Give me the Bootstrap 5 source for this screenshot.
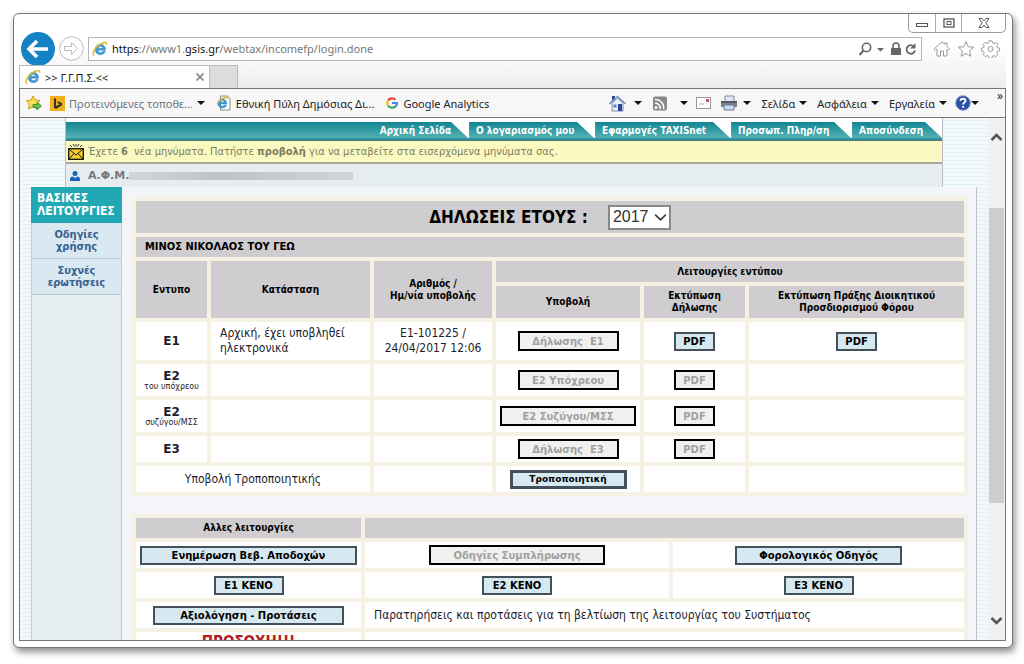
<!DOCTYPE html>
<html lang="el">
<head>
<meta charset="utf-8">
<meta name="viewport" content="width=device-width, initial-scale=1">
<title>&gt;&gt; Γ.Γ.Π.Σ.&lt;&lt;</title>
<link href="https://cdn.jsdelivr.net/npm/bootstrap@5.3.0/dist/css/bootstrap.min.css" rel="stylesheet">
<style>
:root{--page:"DejaVu Sans Condensed","DejaVu Sans",sans-serif;--wide:"DejaVu Sans",sans-serif;--chrome:"Noto Sans","Open Sans",sans-serif}
body{font-family:var(--page);font-size:12px;line-height:15px;color:#1c1c2c;background:#fff;padding:13px 11px 16px 13px;height:100vh}
button{font:inherit;color:inherit}
svg{display:block;flex:none}
a{text-decoration:none;color:inherit}
.plain{border:0;background:none;padding:0}
.win{border:1px solid #777;border-radius:6px;box-shadow:2px 4px 7px rgba(0,0,0,.45);padding:0 6px 6px 5px;position:relative;background:#fff}
.frame-top{background:linear-gradient(#fff 45%,#ececee);padding-top:18px}
.chrome{font-family:var(--chrome);font-size:11px;color:#222}
.controls{top:0;right:6px;height:19px;border:1px solid #999;border-top:0;border-radius:0 0 5px 5px;background:#fff;overflow:hidden}
.controls button{width:26px}
.controls button+button{border-left:1px solid #aaa}
.controls button:last-child{width:44px}
.navrow{height:33px;padding-left:2px}
.address{height:24px;border:1px solid #b5b5b5;background:#fff;padding:0 3px;gap:4px;color:#777}
.address b{font-weight:400;color:#111}
.tools{margin:0 6px 0 10px}
.tabrow{height:23px}
.doc-tab{width:191px;background:#fff;border:1px solid #bbb;border-bottom:0;padding:0 5px;gap:4px}
.new-tab{width:28px;background:#dcdcde;border:1px solid #bbb;border-left:0;border-bottom:0}
.favbar{height:30px;border:1px solid #777;background:#f7f7f8;padding:0 26px 0 6px;white-space:nowrap;position:relative}
.fav-icon{margin:0 5px 0 12px}
.menu-btn{margin-left:10px}
.caret{width:0;height:0;border:4px solid transparent;border-top-color:#111;border-bottom:0;flex:none}
.overflow-mark{top:-1px;right:2px;font-size:12px}
.view{border:1px solid #777;border-top:0;overflow:hidden;background:repeating-linear-gradient(#f3f8fc 0 2px,#e2f0f6 2px 3px,#f3f8fc 3px 4px)}
.site-head{margin:0 45px;border:1px solid #bcbcc4;border-width:0 1px;padding-top:4px;background:#fff}
.site-nav{height:18px;border-bottom:2px solid #2b9397;gap:1px}
.site-nav a{background:linear-gradient(#128592,#55b2b4);color:#fff;font-weight:700;font-size:10px;line-height:17px;padding-left:7px;clip-path:polygon(0 0,calc(100% - 17px) 0,100% 100%,0 100%);flex:none}
.site-nav a:first-child{flex:1;text-align:right;padding-right:17px}
.n1{width:125px}.n2{width:135px}.n3{width:120px}.n4{width:90px}
.notice{height:24px;background:#fafac0;border-bottom:2px solid #a9a9a0;border-top:1px solid #50757c;color:#7c7c66;padding-left:2px;gap:4px;font-size:11px}
.afm{height:23px;background:#e6edf0;color:#777;font-weight:700;padding-left:4px;gap:8px;font-size:11px;font-family:var(--wide)}
.redact{width:224px;height:8px;background:linear-gradient(90deg,#d3d5d8,#bfc2c7 40%,#d0d3d7);margin-left:-8px}
.body-row{margin:0 11px;border-right:1px solid #bfc3cb;background:#f4f5f8}
.side{width:91px;background:#e6edef;border:1px solid #c4cdd4;border-width:0 1px;font-weight:700;color:#36618f;font-size:11px;line-height:12px;text-align:center}
.side h2{font-size:12px;line-height:13px;font-weight:700;text-align:left;color:#fff;background:#22a8b4;margin:0 -1px;padding:5px 0 5px 6px;height:36px}
.side a{display:block;height:36px;padding-top:6px;background:#d9e8f1;border-bottom:1px solid #bccbd6}
.main{padding:10px 8px 0 10px}
.forms{width:100%;table-layout:fixed;border-collapse:separate;border-spacing:4px;background:#f5f2e3;margin-bottom:18px;color:#1c1c2c}
.forms td,.forms th{padding:0;text-align:center;vertical-align:middle;line-height:12px}
.forms td{background:#fff}
.forms th,.forms .grey{background:#cfcdcf;font-size:10px;font-weight:700;color:#000}
.forms .owner{font-size:11px}
.forms tbody th{background:#fff;font-size:12px;color:#1c1c2c;font-family:var(--wide)}
.forms small{display:block;font-size:8px;line-height:9px;font-weight:400;font-family:var(--wide)}
.forms .lines{line-height:15px}
.forms .txt{text-align:left;padding-left:9px}
.c1{width:71px}.c2{width:159px}.c3{width:118px}.c4{width:144px}.c5{width:101px}.c6{width:215px}
.d1{width:225px}.d2{width:304px}.d3{width:291px}
.h20{height:20px}.h21{height:21px}.h24{height:24px}.h26{height:26px}.h32{height:32px}.h38{height:38px}
.year-row{gap:20px}
.year-label{font-size:17px;line-height:20px}
.year{width:63px;height:25px;border:2px solid #888;border-radius:0;padding:0 3px;font-family:"Liberation Sans",sans-serif;font-size:16px;line-height:20px;color:#333;background-position:right 2px center;background-size:13px 13px}
.act{height:19px;border:2px solid #44505a;background:#d6e8f0;color:#000;font:700 10px/13px var(--wide);padding:0;border-radius:0;vertical-align:middle;white-space:nowrap}
.act:disabled{height:20px;border-color:#000;background:#f0f0f0;color:#a0a0a0}
.act.main-act{font-size:9px;border-width:3px}
.w41{width:41px}.w70{width:70px}.w100{width:101px}.w117{width:117px}.w136{width:136px}.w167{width:167px}.w176{width:176px}.w191{width:191px}.w217{width:217px}
.alert-line{color:#b02020;font-size:15px;font-weight:700;line-height:20px}
.sbar{width:17px;background:#f0f0f0;padding:12px 1px}
.thumb{background:#cdcdcd;height:295px;margin-top:65px}
</style>
</head>
<body>
<svg width="0" height="0" class="position-absolute" aria-hidden="true">
<symbol id="ie" viewBox="0 0 16 16"><path d="M13.6 9.2H6.1c.2 1.500 1.100 2.300 2.400 2.300 1 0 1.700-.4 2.200-1.200h2.600c-.8 2.300-2.500 3.500-4.900 3.500C5.200 13.800 3.200 11.700 3.200 8.600s2.200-5.300 5.200-5.300c3.200 0 5.200 2.300 5.200 5.300zM6.200 7.200h4.500C10.500 6 9.700 5.300 8.500 5.300S6.500 6 6.200 7.200z" fill="#3f9bd8" stroke="#2277b5" stroke-width=".4"/><path d="M2 14.600C-.4 12.600 2.800 6.600 8 3.300c4-2.500 7.300-2.600 6.500.6" fill="none" stroke="#d9b92c" stroke-width="1.500"/></symbol>
</svg>
<div class="win d-flex flex-column h-100">
  <div class="controls position-absolute d-flex">
    <button class="plain d-flex align-items-center justify-content-center" aria-label="Ελαχιστοποίηση"><svg width="12" height="10" viewBox="0 0 12 10"><rect x=".5" y="5.500" width="11" height="3" fill="#fff" stroke="#555"/></svg></button>
    <button class="plain d-flex align-items-center justify-content-center" aria-label="Μεγιστοποίηση"><svg width="12" height="10" viewBox="0 0 12 10"><rect x="1" y="1" width="10" height="8" fill="#fff" stroke="#555" stroke-width="1.300"/><rect x="4" y="3.500" width="4" height="3" fill="#fff" stroke="#555"/></svg></button>
    <button class="plain d-flex align-items-center justify-content-center" aria-label="Κλείσιμο"><svg width="12" height="10" viewBox="0 0 12 10"><path d="M1 .5h3l2 2.300 2-2.300h3L7.800 5 11 9.500H8L6 7 4 9.500H1L4.200 5z" fill="#fff" stroke="#555"/></svg></button>
  </div>
  <div class="frame-top chrome">
    <div class="navrow d-flex align-items-center">
      <button class="plain" aria-label="Πίσω"><svg width="34" height="34" viewBox="0 0 34 34"><circle cx="17" cy="17" r="17" fill="#1583c3"/><path d="M27 17H9m7-8-8 8 8 8" fill="none" stroke="#fff" stroke-width="3.600"/></svg></button>
      <button class="plain ms-1 me-1" aria-label="Εμπρός"><svg width="25" height="25" viewBox="0 0 25 25"><circle cx="12.500" cy="12.500" r="11.800" fill="#fff" stroke="#bbb"/><path d="M5.500 10.500h7V6.500l6 6-6 6v-4h-7z" fill="#fff" stroke="#bbb"/></svg></button>
      <div class="address flex-grow-1 d-flex align-items-center">
        <svg width="16" height="16"><use href="#ie"/></svg>
        <div class="flex-grow-1" role="textbox" contenteditable="true" aria-label="Διεύθυνση"><b>https</b>://www1.<b>gsis.gr</b>/webtax/incomefp/login.done</div>
        <svg width="60" height="16" viewBox="0 0 60 16"><g fill="none" stroke="#666"><circle cx="8.500" cy="6.500" r="4.200" stroke-width="1.600"/><path d="M5.500 9.500 1.500 14" stroke-width="2"/><path d="M56 5.500a4.300 4.300 0 1 0 1 4" stroke-width="1.800"/></g><path d="M19 7h7l-3.500 3.500zM57.500 2v5.500H52z" fill="#666"/><path d="M33 7h10v7H33z" fill="#666"/><path d="M35 7V5a3 3 0 0 1 6 0v2" fill="none" stroke="#666" stroke-width="1.600"/></svg>
      </div>
      <svg class="tools" width="68" height="18" viewBox="0 0 68 18" fill="#fff" stroke="#999"><path d="M5 9 3.500 10.500 2 9l8-7 2.500 2.200V3H15v3.500L17.500 9 16 10.500 15 9.500V16h-3.500v-5h-3v5H5z"/><path d="m34 1.500 2.200 5.300 5.600.4-4.300 3.600 1.400 5.500L34 13.400l-4.900 2.900 1.400-5.500-4.300-3.600 5.600-.4z"/><path d="M56 1.800h3l.5 2 1.500.7 1.900-1.100 1.900 1.900-1 1.900.6 1.400 2.100.6v2.600l-2.100.6-.6 1.400 1 1.900-1.900 1.900-1.900-1-1.500.6-.5 2h-3l-.5-2-1.500-.6-1.900 1-1.900-1.900 1-1.900-.6-1.400-2.100-.6V9.200l2.100-.6.6-1.400-1-1.900 1.900-1.900L54 4.500l1.500-.7z" transform="translate(1 -1)"/><circle cx="58.500" cy="9" r="2.500"/></svg>
    </div>
    <div class="tabrow d-flex">
      <div class="doc-tab d-flex align-items-center"><svg width="16" height="16"><use href="#ie"/></svg><span class="flex-grow-1">&gt;&gt; Γ.Γ.Π.Σ.&lt;&lt;</span><button class="plain" aria-label="Κλείσιμο καρτέλας"><svg width="8" height="8" viewBox="0 0 8 8"><path d="m.5.5 7 7m0-7-7 7" stroke="#888" stroke-width="1.600"/></svg></button></div>
      <button class="new-tab p-0" aria-label="Νέα καρτέλα"></button>
    </div>
  </div>
  <div class="favbar chrome d-flex align-items-center flex-shrink-0">
    <svg width="16" height="16" viewBox="0 0 16 16"><path d="m7 1 2 4 5 .6-3.600 3.500.6 4.900-4-2.400L2.600 14l.8-4.900L.5 5.600l4.600-.6z" fill="#f9e24b" stroke="#c99a1c"/><path d="M7 9.500h4V7l4.500 4-4.500 4v-2.500H7z" fill="#63bf4e" stroke="#2d8a2f" stroke-width=".8"/></svg>
    <svg class="ms-2" width="15" height="15" viewBox="0 0 15 15"><path d="M0 0h15v15H0z" fill="#f3ae1c"/><path d="m4 2 2 .8V10l4-1.800-2-1-1-2.200 5 2v2.200L6 13l-2-1.200z" fill="#333"/></svg>
    <a href="#" class="ms-1 text-secondary">Προτεινόμενες τοποθε...</a><span class="caret ms-1"></span>
    <svg class="fav-icon" width="14" height="16" viewBox="0 0 14 16"><path d="M3.500 1h7L13 3.500V15H3.500z" fill="#fff" stroke="#888"/><use href="#ie" x="-2" y="1" width="14" height="14"/></svg>
    <a href="#">Εθνική Πύλη Δημόσιας Δι...</a>
    <svg class="fav-icon" width="12" height="12" viewBox="0 0 12 12" fill="none" stroke-width="2.200"><path d="M2 3.500A5 5 0 0 1 9.500 2.600" stroke="#e94235"/><path d="M1.900 3.700a5 5 0 0 0 0 4.600" stroke="#fabb05"/><path d="M2 8.500a5 5 0 0 0 7.200 1.200" stroke="#34a853"/><path d="M9.200 9.700A4.700 4.700 0 0 0 10.900 6H6" stroke="#4285f4"/></svg>
    <a href="#">Google Analytics</a>
    <div class="ms-auto d-flex align-items-center">
      <svg width="17" height="17" viewBox="0 0 17 17"><path d="M3 8v8h11V8L8.500 3z" fill="#e8edf8" stroke="#7d8bab"/><path d="M3 1h3v4L3 7z" fill="#33488f"/><path d="M.5 9 8.500 1.500l8 7.500" fill="none" stroke="#7c96c4" stroke-width="1.600"/><path d="M9 9h4v7H9z" fill="#2e479c"/><path d="M4.500 9.500h3v3h-3z" fill="#5e7fc9"/></svg><span class="caret ms-2"></span>
      <svg class="ms-2 me-1" width="18" height="15" viewBox="0 0 18 15"><rect x="3" y=".5" width="14" height="14" rx="2" fill="#888"/><circle cx="6" cy="11.500" r="1.500" fill="#fff"/><path d="M5 7a5 5 0 0 1 5 6M5 3.500A8 8 0 0 1 13.500 13" fill="none" stroke="#fff" stroke-width="1.500"/></svg><span class="caret mx-2"></span>
      <svg width="15" height="12" viewBox="0 0 15 12"><rect x=".5" y=".5" width="14" height="11" fill="#fff" stroke="#999"/><path d="M10 2h3v3h-3z" fill="#c55d68"/><path d="M3 7h5" stroke="#aaa"/></svg>
      <svg class="ms-2" width="20" height="16" viewBox="0 0 20 16"><path d="M6 1h9v6H6z" fill="#dfe9f8" stroke="#889"/><path d="M2 6h16v6H2z" fill="#7b8190"/><path d="M2 6h16v2H2z" fill="#555b68"/><path d="M5 10h10v5H5z" fill="#c5dcf4" stroke="#778"/></svg><span class="caret ms-1"></span>
      <button class="plain menu-btn d-flex align-items-center gap-1">Σελίδα<span class="caret"></span></button>
      <button class="plain menu-btn d-flex align-items-center gap-1">Ασφάλεια<span class="caret"></span></button>
      <button class="plain menu-btn d-flex align-items-center gap-1">Εργαλεία<span class="caret"></span></button>
      <button class="plain d-flex align-items-center ms-2" aria-label="Βοήθεια"><svg width="16" height="16" viewBox="0 0 16 16"><circle cx="8" cy="8" r="7.300" fill="#2b4ea6" stroke="#8b9ccb"/><path d="M5.500 6c0-3 5-3 5 0 0 1.600-2.400 1.600-2.400 3.500" fill="none" stroke="#fff" stroke-width="1.800"/><circle cx="8.100" cy="11.800" r="1.100" fill="#fff"/></svg><span class="caret"></span></button>
    </div>
    <span class="overflow-mark position-absolute">»</span>
  </div>
  <div class="view d-flex flex-grow-1">
    <div class="flex-grow-1 d-flex flex-column">
      <header class="site-head">
        <nav class="site-nav d-flex">
          <a href="#">Αρχική Σελίδα</a><a href="#" class="n1">Ο λογαριασμός μου</a><a href="#" class="n2">Εφαρμογές TAXISnet</a><a href="#" class="n3">Προσωπ. Πληρ/ση</a><a href="#" class="n4">Αποσύνδεση</a>
        </nav>
        <div class="notice d-flex align-items-center"><svg width="16" height="16" viewBox="0 0 16 16"><path d="m2 1 2 2m1-3 1.500 2.500M8 0v2.500M11 0 9.500 2.500M14 1l-2 2" stroke="#333"/><rect x=".7" y="4.700" width="14.600" height="10.600" fill="#f6cf2d" stroke="#111" stroke-width="1.300"/><path d="m1 5 7 6 7-6M1 15l5-5.500M15 15l-5-5.500" fill="none" stroke="#111"/></svg><span>Έχετε <b>6</b>&nbsp; νέα μηνύματα. Πατήστε <a href="#"><b>προβολή</b></a> για να μεταβείτε στα εισερχόμενα μηνύματα σας.</span></div>
        <div class="afm d-flex align-items-center"><svg width="10" height="10" viewBox="0 0 10 10" fill="#1766b8"><circle cx="5" cy="2.600" r="2.500"/><path d="M0 10V8c0-2 2-2.600 3-2.600L5 7l2-1.600c1 0 3 .6 3 2.600v2z"/></svg><span>Α.Φ.Μ.</span><div class="redact"></div></div>
      </header>
      <div class="body-row d-flex flex-grow-1">
        <nav class="side flex-shrink-0"><h2>ΒΑΣΙΚΕΣ ΛΕΙΤΟΥΡΓΙΕΣ</h2><a href="#">Οδηγίες<br>χρήσης</a><a href="#">Συχνές<br>ερωτήσεις</a></nav>
        <main class="main flex-grow-1">
          <table class="forms">
            <colgroup><col class="c1"><col class="c2"><col class="c3"><col class="c4"><col class="c5"><col class="c6"></colgroup>
            <thead>
            <tr class="h32"><th colspan="6"><div class="year-row d-flex align-items-center justify-content-center"><label class="year-label" for="year">ΔΗΛΩΣΕΙΣ ΕΤΟΥΣ :</label><select id="year" class="form-select year"><option>2017</option></select></div></th></tr>
            <tr class="h20"><th colspan="6" class="txt owner">ΜΙΝΟΣ ΝΙΚΟΛΑΟΣ ΤΟΥ ΓΕΩ</th></tr>
            <tr class="h21"><th rowspan="2">Εντυπο</th><th rowspan="2">Κατάσταση</th><th rowspan="2">Αριθμός /<br>Ημ/νία υποβολής</th><th colspan="3">Λειτουργίες εντύπου</th></tr>
            <tr class="h32"><th>Υποβολή</th><th>Εκτύπωση<br>Δήλωσης</th><th>Εκτύπωση Πράξης Διοικητικού<br>Προσδιορισμού Φόρου</th></tr>
            </thead>
            <tbody>
            <tr class="h38"><th>E1</th><td class="txt lines">Αρχική, έχει υποβληθεί ηλεκτρονικά</td><td class="lines">E1-101225 /<br>24/04/2017 12:06</td><td><button class="act w100" disabled>Δήλωσης&nbsp; E1</button></td><td><button class="act w41">PDF</button></td><td><button class="act w41">PDF</button></td></tr>
            <tr class="h32"><th>E2<small>του υπόχρεου</small></th><td></td><td></td><td><button class="act w100" disabled>E2 Υπόχρεου</button></td><td><button class="act w41" disabled>PDF</button></td><td></td></tr>
            <tr class="h32"><th>E2<small>συζύγου/ΜΣΣ</small></th><td></td><td></td><td><button class="act w136" disabled>E2 Συζύγου/ΜΣΣ</button></td><td><button class="act w41" disabled>PDF</button></td><td></td></tr>
            <tr class="h26"><th>E3</th><td></td><td></td><td><button class="act w100" disabled>Δήλωσης&nbsp; E3</button></td><td><button class="act w41" disabled>PDF</button></td><td></td></tr>
            <tr class="h26"><td colspan="2">Υποβολή Τροποποιητικής</td><td></td><td><button class="act main-act w117">Τροποποιητική</button></td><td></td><td></td></tr>
            </tbody>
          </table>
          <table class="forms">
            <colgroup><col class="d1"><col class="d2"><col class="d3"></colgroup>
            <thead><tr class="h20"><th>Αλλες λειτουργίες</th><td colspan="2" class="grey"></td></tr></thead>
            <tbody>
            <tr class="h26"><td><button class="act w217">Ενημέρωση Βεβ. Αποδοχών</button></td><td><button class="act w176" disabled>Οδηγίες Συμπλήρωσης</button></td><td><button class="act w167">Φορολογικός Οδηγός</button></td></tr>
            <tr class="h26"><td><button class="act w70">E1 ΚΕΝΟ</button></td><td><button class="act w70">E2 ΚΕΝΟ</button></td><td><button class="act w70">E3 ΚΕΝΟ</button></td></tr>
            <tr class="h26"><td><button class="act w191">Αξιολόγηση - Προτάσεις</button></td><td colspan="2" class="txt">Παρατηρήσεις και προτάσεις για τη βελτίωση της λειτουργίας του Συστήματος</td></tr>
            <tr class="h20"><td><span class="alert-line">ΠΡΟΣΟΧΗ!!!</span></td><td colspan="2"></td></tr>
            </tbody>
          </table>
        </main>
      </div>
    </div>
    <div class="sbar d-flex flex-column flex-shrink-0">
      <svg class="mx-auto" width="13" height="13" viewBox="0 0 13 13"><path d="M1.500 10 6.500 5l5 5" fill="none" stroke="#555" stroke-width="2.600"/></svg>
      <div class="thumb"></div>
      <svg class="mx-auto mt-auto" width="13" height="13" viewBox="0 0 13 13"><path d="m1.500 3 5 5 5-5" fill="none" stroke="#555" stroke-width="2.600"/></svg>
    </div>
  </div>
</div>
<script src="https://cdn.jsdelivr.net/npm/bootstrap@5.3.0/dist/js/bootstrap.bundle.min.js"></script>
</body>
</html>
